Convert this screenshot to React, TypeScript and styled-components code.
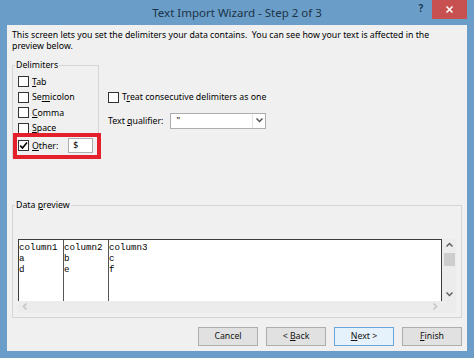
import styled, { createGlobalStyle } from "styled-components";

const UI_FONT = `"Noto Sans", "Open Sans", sans-serif`;

const GlobalStyle = createGlobalStyle`
  html, body {
    margin: 0;
    padding: 0;
  }
  body {
    width: 474px;
    height: 358px;
    overflow: hidden;
    background: #6a9ec8;
    font-family: ${UI_FONT};
  }
`;

const Window = styled.div`
  box-sizing: border-box;
  width: 474px;
  height: 358px;
  padding: 0 7px 7px;
  background: #6a9ec8;
  display: flex;
  flex-direction: column;
`;

const TitleBar = styled.div`
  height: 25px;
  display: grid;
  grid-template-columns: 1fr auto 1fr;
  align-items: start;
`;

const Title = styled.div`
  grid-column: 2;
  font-size: 11.5px;
  line-height: 26px;
  color: #1d3347;
  white-space: nowrap;
`;

const Controls = styled.div`
  grid-column: 3;
  justify-self: end;
  display: flex;
  align-items: flex-start;
`;

const HelpButton = styled.div`
  width: 22px;
  height: 18px;
  line-height: 17px;
  text-align: center;
  font-size: 10px;
  font-weight: bold;
  color: #1c3a56;
`;

const CloseButton = styled.div`
  width: 35px;
  height: 19px;
  background: #c75050;
  display: flex;
  align-items: center;
  justify-content: center;
`;

const Client = styled.div`
  flex: 1;
  background: #f0f0f0;
  padding: 5px 5px 5px;
  display: flex;
  flex-direction: column;
  font-size: 8.75px;
  color: #000;
`;

const Intro = styled.div`
  line-height: 11px;
  padding-left: 0;
  white-space: nowrap;
`;

const TopSection = styled.div`
  display: flex;
  align-items: flex-start;
  margin-top: 8px;
`;

const Group = styled.fieldset<{ $width?: number }>`
  margin: 0;
  min-width: 0;
  ${({ $width }) => ($width ? `width: ${$width}px;` : "")}
  box-sizing: border-box;
  border: 1px solid #d5d5d5;
  padding: 3px 0 3px 5px;
`;

const DataGroup = styled(Group)`
  margin-top: 42px;
  padding: 27.5px 5px 4px 5px;
`;

const Legend = styled.legend`
  margin-left: -3px;
  padding: 0 1px;
  line-height: 11px;
  font-size: 8.75px;
`;

const CheckRow = styled.label`
  display: flex;
  align-items: center;
  height: 15.5px;
  white-space: nowrap;
`;

const Box = styled.span`
  box-sizing: border-box;
  width: 11px;
  height: 11px;
  border: 1px solid #333;
  background: #fff;
  margin-right: 3px;
  flex-shrink: 0;
  display: flex;
  align-items: center;
  justify-content: center;
`;

const OtherRow = styled.div`
  position: relative;
  display: flex;
  align-items: center;
  height: 17px;
  margin-top: 1px;
`;

const Highlight = styled.div`
  position: absolute;
  left: -5px;
  right: -3px;
  top: -4px;
  bottom: -5px;
  border: 4px solid #e3202b;
  pointer-events: none;
`;

const SmallInput = styled.div`
  box-sizing: border-box;
  width: 25px;
  height: 15px;
  margin-left: 10px;
  border: 1px solid #abadb3;
  background: #fff;
  padding-left: 4px;
  line-height: 13px;
`;

const RightColumn = styled.div`
  margin-left: 9px;
  padding-top: 29.5px;
  display: flex;
  flex-direction: column;
`;

const QualifierRow = styled.div`
  display: flex;
  align-items: center;
  height: 16px;
  margin-top: 7.5px;
  white-space: nowrap;
`;

const Combo = styled.div`
  box-sizing: border-box;
  width: 96px;
  height: 16px;
  margin-left: 7px;
  border: 1px solid #abadb3;
  background: #fff;
  display: flex;
`;

const ComboValue = styled.div`
  flex: 1;
  padding-left: 5px;
  line-height: 14px;
`;

const ComboArrow = styled.div`
  width: 12px;
  border-left: 1px solid #e2e2e2;
  display: flex;
  align-items: center;
  justify-content: center;
`;

const Preview = styled.div`
  height: 74px;
  display: grid;
  grid-template-columns: 1fr 14px;
  grid-template-rows: 1fr 12px;
`;

const Sheet = styled.div`
  background: #fff;
  border: 1px solid #3c3c3c;
  border-bottom: none;
  display: flex;
  font-family: "Liberation Mono", "Courier New", monospace;
  font-size: 9.17px;
  line-height: 11px;
  color: #000;
  overflow: hidden;
`;

const SheetColumn = styled.div<{ $last?: boolean }>`
  ${({ $last }) => ($last ? "flex: 1;" : "width: 44px; border-right: 1px solid #555;")}
  padding-top: 2.5px;
  white-space: pre;
`;

const VScroll = styled.div`
  background: #ececec;
  display: flex;
  flex-direction: column;
  align-items: center;
`;

const ArrowCell = styled.div<{ $w?: number; $h?: number }>`
  width: ${({ $w }) => $w ?? 14}px;
  height: ${({ $h }) => $h ?? 13}px;
  display: flex;
  align-items: center;
  justify-content: center;
  flex-shrink: 0;
`;

const Thumb = styled.div`
  width: 11px;
  height: 13px;
  margin-top: 1px;
  background: #cdcdcd;
`;

const Spacer = styled.div`
  flex: 1;
`;

const HScroll = styled.div`
  background: #ececec;
  display: flex;
  align-items: center;
`;

const Corner = styled.div`
  background: #ececec;
`;

const ButtonBar = styled.div`
  margin-top: auto;
  display: flex;
  justify-content: flex-end;
  gap: 8px;
`;

const Button = styled.div<{ $default?: boolean }>`
  box-sizing: border-box;
  width: 60px;
  height: 19px;
  line-height: 17px;
  text-align: center;
  border: 1px solid ${({ $default }) => ($default ? "#6aa6de" : "#adadad")};
  background: ${({ $default }) => ($default ? "#e5f1fb" : "#e1e1e1")};
  color: #111;
`;

const Chevron = ({ dir, color }: { dir: "up" | "down" | "left" | "right"; color: string }) => {
  const d = {
    up: "M1.5 5.5 L4.5 2.5 L7.5 5.5",
    down: "M1.5 2.5 L4.5 5.5 L7.5 2.5",
    left: "M5.5 1.5 L2.5 4.5 L5.5 7.5",
    right: "M2.5 1.5 L5.5 4.5 L2.5 7.5",
  }[dir];
  return (
    <svg width="9" height="9" viewBox="0 0 9 9">
      <path d={d} fill="none" stroke={color} strokeWidth="1.5" />
    </svg>
  );
};

const Check = ({ checked }: { checked?: boolean }) => (
  <Box>
    {checked && (
      <svg width="9" height="9" viewBox="0 0 9 9">
        <path d="M1.2 4.6 L3.5 7 L8 1.5" fill="none" stroke="#000" strokeWidth="1.6" />
      </svg>
    )}
  </Box>
);

const delimiters = [
  { pre: "", key: "T", post: "ab" },
  { pre: "Se", key: "m", post: "icolon" },
  { pre: "", key: "C", post: "omma" },
  { pre: "", key: "S", post: "pace" },
];

const preview = [
  ["column1", "a", "d"],
  ["column2", "b", "e"],
  ["column3", "c", "f"],
];

const App = () => {
  return (
    <>
      <GlobalStyle />
      <Window>
        <TitleBar>
          <Title>Text Import Wizard - Step 2 of 3</Title>
          <Controls>
            <HelpButton>?</HelpButton>
            <CloseButton>
              <svg width="9" height="9" viewBox="0 0 9 9">
                <path d="M1.5 1.5 L7.5 7.5 M7.5 1.5 L1.5 7.5" stroke="#fff" strokeWidth="1.6" />
              </svg>
            </CloseButton>
          </Controls>
        </TitleBar>
        <Client>
          <Intro>
            This screen lets you set the delimiters your data contains.&nbsp; You can see how your text is affected in
            the
            <br />
            preview below.
          </Intro>
          <TopSection>
            <Group $width={87}>
              <Legend>Delimiters</Legend>
              {delimiters.map(({ pre, key, post }) => (
                <CheckRow key={pre + key + post}>
                  <Check />
                  <span>
                    {pre}
                    <u>{key}</u>
                    {post}
                  </span>
                </CheckRow>
              ))}
              <OtherRow>
                <Check checked />
                <span>
                  <u>O</u>ther:
                </span>
                <SmallInput>$</SmallInput>
                <Highlight />
              </OtherRow>
            </Group>
            <RightColumn>
              <CheckRow>
                <Check />
                <span>
                  T<u>r</u>eat consecutive delimiters as one
                </span>
              </CheckRow>
              <QualifierRow>
                <span>
                  Text <u>q</u>ualifier:
                </span>
                <Combo>
                  <ComboValue>"</ComboValue>
                  <ComboArrow>
                    <Chevron dir="down" color="#555" />
                  </ComboArrow>
                </Combo>
              </QualifierRow>
            </RightColumn>
          </TopSection>
          <DataGroup>
            <Legend>
              Data <u>p</u>review
            </Legend>
            <Preview>
              <Sheet>
                {preview.map((col, i) => (
                  <SheetColumn key={col[0]} $last={i === preview.length - 1}>
                    {col.join("\n")}
                  </SheetColumn>
                ))}
              </Sheet>
              <VScroll>
                <ArrowCell>
                  <Chevron dir="up" color="#606060" />
                </ArrowCell>
                <Thumb />
                <Spacer />
                <ArrowCell>
                  <Chevron dir="down" color="#606060" />
                </ArrowCell>
              </VScroll>
              <HScroll>
                <ArrowCell $h={12}>
                  <Chevron dir="left" color="#c4c4c4" />
                </ArrowCell>
                <Spacer />
                <ArrowCell $h={12}>
                  <Chevron dir="right" color="#c4c4c4" />
                </ArrowCell>
              </HScroll>
              <Corner />
            </Preview>
          </DataGroup>
          <ButtonBar>
            <Button>Cancel</Button>
            <Button>
              &lt; <u>B</u>ack
            </Button>
            <Button $default>
              <u>N</u>ext &gt;
            </Button>
            <Button>
              <u>F</u>inish
            </Button>
          </ButtonBar>
        </Client>
      </Window>
    </>
  );
};

export default App;
